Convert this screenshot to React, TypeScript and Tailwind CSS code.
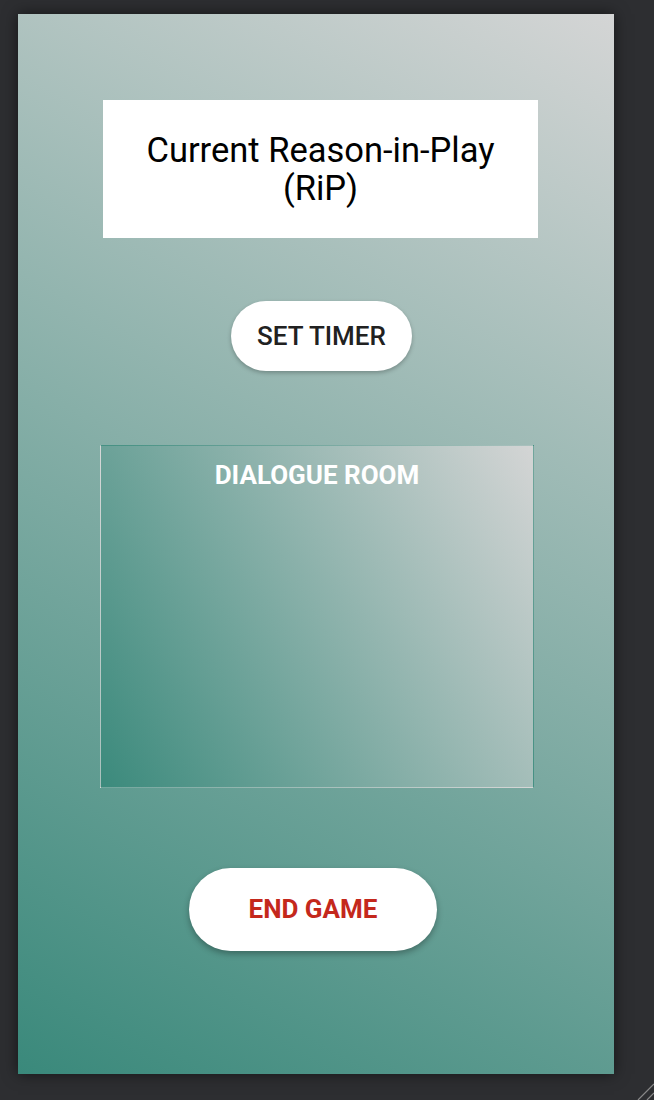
export default function App() {
  return (
    <div className="relative h-[1100px] w-full overflow-hidden bg-[#2d2e31] pt-[14px] pl-[18px]" style={{ fontFamily: 'Roboto, "Liberation Sans", sans-serif' }}>
      <div className="flex h-[1060px] w-[596px] flex-col items-center bg-linear-209/srgb from-[#d4d5d5] to-[#3a897b] pt-[86px] shadow-[0_0_14px_rgba(0,0,0,0.55)]">
        <div className="ml-[9px] flex h-[138px] w-[435px] items-center justify-center bg-white px-6 text-center text-[34.5px] leading-[38px] text-black">
          Current Reason-in-Play (RiP)
        </div>

        <button className="mt-[63px] ml-[11px] h-[70px] w-[181px] rounded-full bg-white text-[26px] font-medium text-[#212121] shadow-[0_2px_4px_rgba(0,0,0,0.25)]">
          SET TIMER
        </button>

        <div className="mt-[74px] ml-[2px] h-[343px] w-[434px] border border-white/5 bg-linear-60/srgb from-[#3b8a7c] to-[#d4d5d5] pt-[10px] text-center">
          <div className="text-[26px] font-bold text-white">DIALOGUE ROOM</div>
        </div>

        <button className="mt-[80px] mr-[6px] h-[83px] w-[248px] rounded-full bg-white text-[26px] font-bold text-[#c4281c] shadow-[0_3px_6px_rgba(0,0,0,0.3)]">
          END GAME
        </button>
      </div>

      <svg className="absolute right-0 bottom-0 h-[20px] w-[20px]" viewBox="0 0 20 20">
        <line x1="4" y1="20" x2="20" y2="4" stroke="#8a8a8a" strokeWidth="1.2" />
        <line x1="13" y1="20" x2="20" y2="13" stroke="#8a8a8a" strokeWidth="1.2" />
      </svg>
    </div>
  );
}
